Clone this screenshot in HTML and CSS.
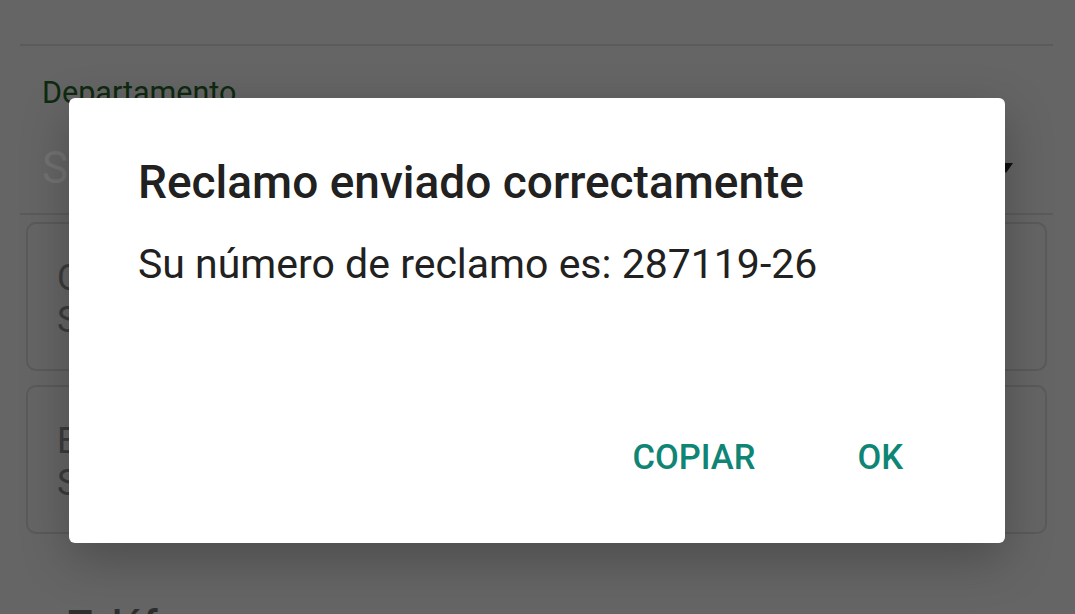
FILE: index.html
```html
<!DOCTYPE html>
<html>
<head>
    <title>Nuevo reclamo</title>
    <link rel="stylesheet" href="styles.css">
</head>
<body>
    <div class="page">
        <div class="rule rule-top"></div>

        <div class="field">
            <label class="field-label">Departamento</label>
            <div class="select-row">
                <span class="select-placeholder">Seleccione</span>
                <span class="select-arrow"></span>
            </div>
        </div>
        <div class="rule"></div>

        <div class="card-list">
            <div class="card">
                <div class="card-line">Calle</div>
                <div class="card-line">Seleccione</div>
            </div>
            <div class="card">
                <div class="card-line">Barrio</div>
                <div class="card-line">Seleccione</div>
            </div>
        </div>

        <h3 class="section-title">Teléfono</h3>
    </div>

    <div class="dialog">
        <h2 class="dialog-title">Reclamo enviado correctamente</h2>
        <p class="dialog-message">Su número de reclamo es: 287119-26</p>
        <div class="dialog-actions">
            <button class="dialog-button">COPIAR</button>
            <button class="dialog-button">OK</button>
        </div>
    </div>
</body>
</html>
```

FILE: styles.css
```css
body {
    margin: 0;
    height: 614px;
    overflow: hidden;
    background-color: #656565;
    font-family: Roboto, "Noto Sans", sans-serif;
}

.page {
    padding: 0 22px 0 20px;
}

.rule {
    height: 2px;
    background-color: #5b5b5b;
}

.rule-top {
    margin-top: 44px;
}

.field {
    padding: 30px 0 0 22px;
}

.field-label {
    display: block;
    font-size: 30.5px;
    line-height: 34px;
    color: #0e2a10;
}

.select-row {
    display: flex;
    align-items: center;
    justify-content: space-between;
    height: 103px;
    padding-right: 40px;
}

.select-placeholder {
    font-size: 44px;
    color: #727272;
    margin-top: 12px;
}

.select-arrow {
    width: 0;
    height: 0;
    border-left: 7px solid transparent;
    border-right: 7px solid transparent;
    border-top: 10px solid #0d0f0d;
    margin-top: 12px;
}

.card-list {
    display: flex;
    flex-direction: column;
    gap: 14px;
    padding: 7px 6px 0 6px;
}

.card {
    height: 149px;
    border: 2px solid #5a5a5a;
    border-radius: 10px;
    padding: 33px 0 0 29px;
    box-sizing: border-box;
}

.card-line {
    font-size: 36px;
    line-height: 42px;
    color: #3b3b3b;
}

.section-title {
    margin: 68px 0 0 48px;
    font-size: 40px;
    font-weight: 500;
    color: #2e2e2e;
}

/* alert dialog sitting over the form */
.dialog {
    position: absolute;
    top: 98px;
    left: 69px;
    width: 936px;
    height: 445px;
    box-sizing: border-box;
    padding: 57px 69px 0 69px;
    background-color: #fff;
    border-radius: 6px;
    box-shadow: 0 16px 48px rgba(0, 0, 0, 0.25);
    display: flex;
    flex-direction: column;
}

.dialog-title {
    margin: 0;
    font-size: 46px;
    line-height: 54px;
    font-weight: 500;
    color: #212121;
}

.dialog-message {
    margin: 31px 0 0 0;
    font-size: 41px;
    line-height: 48px;
    color: #212121;
}

.dialog-actions {
    margin-top: auto;
    display: flex;
    justify-content: flex-end;
    gap: 40px;
    padding: 0 0 56px 0;
    margin-right: 2px;
}

.dialog-button {
    background: none;
    border: none;
    padding: 10px 31px;
    font-family: Roboto, "Noto Sans", sans-serif;
    font-size: 34.5px;
    font-weight: 500;
    color: #0f8575;
    cursor: pointer;
}
```
